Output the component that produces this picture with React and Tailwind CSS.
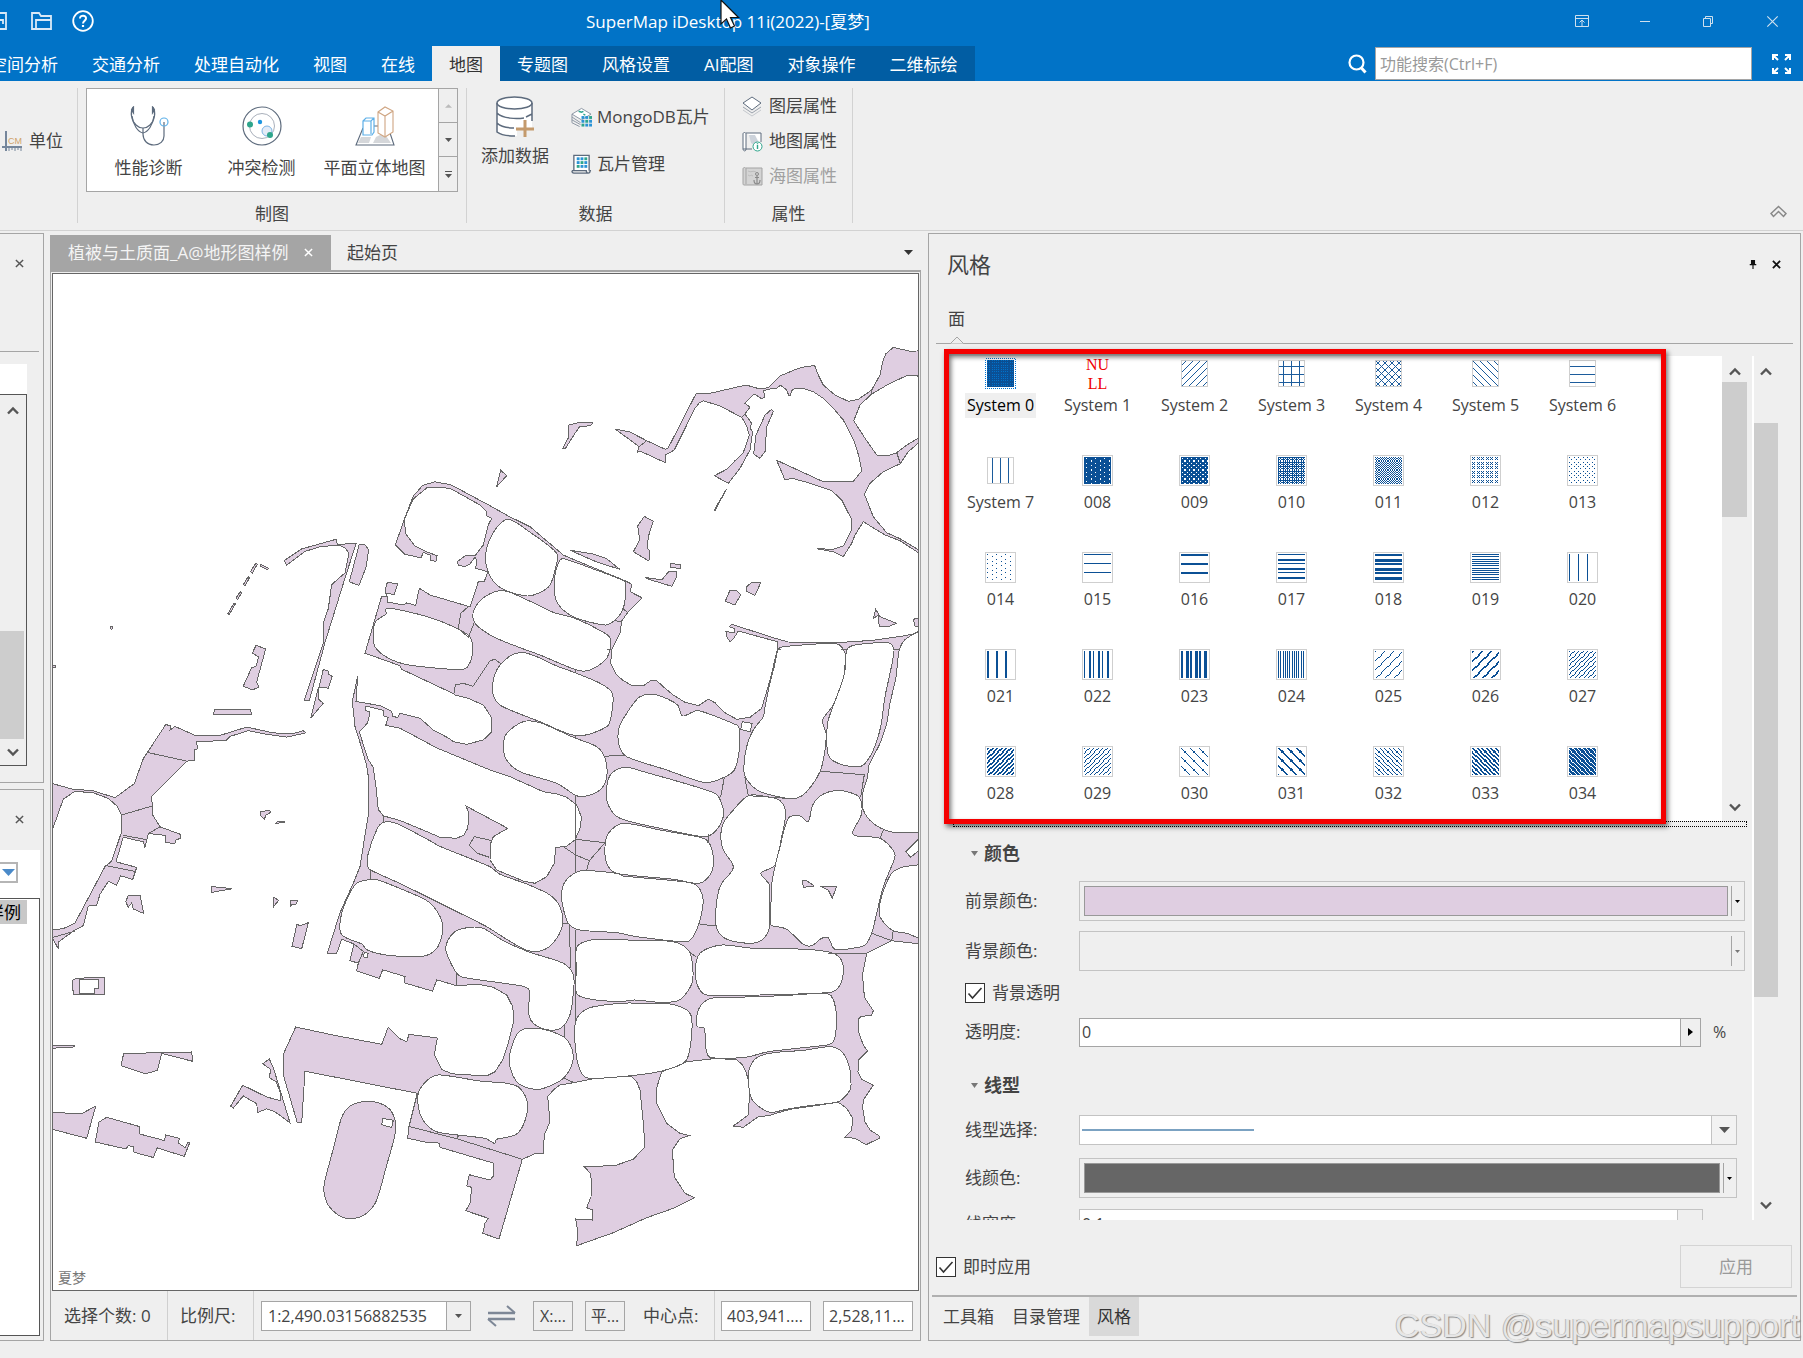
import React from "react";

/* ---------- map geometry ---------- */

// Survey sheets: [left, top, horizontal scale, vertical scale]
const SHEETS = {
  n: [440, 270, 3, 3],
  m: [440, 680, 3, 3],
  s: [440, 1050, 3, 3],
  w: [0, 230, 3, 2.8],
  v: [0, 780, 3, 2.7128],
};

function points(src) {
  let sheet = SHEETS.n;
  const out = [];
  for (const tok of src.trim().split(/\s+/)) {
    if (SHEETS[tok]) {
      sheet = SHEETS[tok];
      continue;
    }
    const [a, b] = tok.split(",").map(Number);
    out.push([sheet[0] + a / sheet[2], sheet[1] + b / sheet[3]]);
  }
  return out;
}

const f = (n) => n.toFixed(1);

function straight(src, close = true) {
  return "M" + points(src).map(([x, y]) => `${f(x)} ${f(y)}`).join("L") + (close ? "Z" : "");
}

function curved(src) {
  const p = points(src);
  const n = p.length;
  let d = `M${f(p[0][0])} ${f(p[0][1])}`;
  for (let i = 0; i < n; i++) {
    const a = p[(i + n - 1) % n];
    const b = p[i];
    const c = p[(i + 1) % n];
    const e = p[(i + 2) % n];
    const len = Math.hypot(c[0] - b[0], c[1] - b[1]);
    const k1 = Math.min(1 / 6, len / 3 / (Math.hypot(c[0] - a[0], c[1] - a[1]) || 1));
    const k2 = Math.min(1 / 6, len / 3 / (Math.hypot(e[0] - b[0], e[1] - b[1]) || 1));
    d += `C${f(b[0] + (c[0] - a[0]) * k1)} ${f(b[1] + (c[1] - a[1]) * k1)} ${f(c[0] - (e[0] - b[0]) * k2)} ${f(c[1] - (e[1] - b[1]) * k2)} ${f(c[0])} ${f(c[1])}`;
  }
  return d + "Z";
}

const GREEN = [
  // north-east belt
  "n 527,478 568,485 620,512 676,538 684,535 768,371 810,370 918,345 960,357 985,353 1020,318 1070,297 1100,289 1124,287 1135,315 1150,345 1185,375 1225,394 1255,388 1295,360 1320,315 1328,275 1337,252 1360,232 1410,244 1430,243 1450,230 1450,325 1430,317 1400,317 1350,340 1295,372 1260,405 1241,452 1275,505 1310,555 1345,557 1370,548 1400,525 1450,496 1450,506 1405,545 1381,581 1330,605 1290,640 1273,672 1300,740 1340,788 1380,806 1450,848 1450,858 1380,812 1335,795 1270,755 1245,795 1235,820 1210,860 1180,845 1130,836 1180,838 1210,828 1235,780 1233,745 1205,690 1175,662 1100,637 1057,625 1035,630 1010,571 1147,634 1240,634 1265,603 1257,560 1243,515 1210,450 1180,415 1150,385 1120,365 1090,355 1065,355 1055,362 1050,378 1046,376 1040,360 1022,346 1010,354 985,358 970,362 975,380 965,386 943,372 925,390 915,400 930,412 915,432 935,460 930,475 938,485 930,540 900,595 865,640 823,617 860,598 885,572 910,548 928,495 920,468 905,442 840,408 790,392 778,398 765,415 703,540 676,555 676,578 600,543 592,547 597,530",
  // central belt
  "w 1186,882 1215,805 1240,745 1268,715 1305,705 1345,712 n 30,643 150,707 205,738 270,770 370,855 385,862 555,932 574,942 572,966 607,984 565,1025 545,1053 540,1090 515,1140 512,1180 530,1215 550,1232 575,1246 612,1246 632,1232 650,1232 m 670,20 700,45 735,67 775,77 805,58 825,68 855,98 890,118 930,112 965,85 990,0 n 1012,1140 1012,1115 895,1083 880,1107 870,1115 860,1100 858,1085 885,1088 883,1075 868,1070 875,1063 1000,1103 1045,1116 1190,1118 1300,1111 1390,1098 1450,1086 m 1450,793 1355,782 1280,820 1268,880 1270,925 1275,955 1300,992 1295,1005 1262,1010 1255,1018 1257,1060 1270,1095 1283,1113 1255,1140 1254,1175 1265,1198 1300,1215 s 1270,150 1268,175 1275,215 1290,240 1318,258 1318,265 1278,284 1245,265 1215,262 1235,240 1238,205 1220,175 1195,157 1050,178 985,197 955,200 910,232 880,228 925,195 930,110 918,65 905,42 890,30 830,25 740,35 700,52 665,65 648,120 650,160 680,220 720,250 748,257 720,266 697,300 703,380 735,430 763,443 700,475 620,503 520,548 410,587 413,545 407,507 457,510 459,480 440,473 453,440 455,400 451,370 433,350 490,348 530,345 580,328 615,290 610,220 600,120 590,95 575,80 500,78 400,98 360,105 340,120 323,140 330,215 313,255 310,310 285,311 247,328 177,567 128,550 135,520 145,505 77,482 90,460 95,412 80,408 88,374 150,390 160,378 162,340 0,292 v 1318,985 1275,982 1223,972 1227,940 1252,850 915,790 905,930 892,930 850,800 852,740 887,670 1000,692 1145,717 1165,670 1200,702 1220,710 1227,690 1312,700 1303,745 1325,785 1355,797 s 140,78 165,65 188,30 m 205,1090 222,1020 218,980 200,945 160,922 115,913 50,917 v 1310,542 1298,573 1212,550 1215,533 1148,515 1138,538 1070,518 1075,497 1050,490 1062,445 1025,432 1010,470 982,470 1020,360 1060,280 1080,235 1095,150 1105,95 1105,0 w 1105,1530 1100,1500 1085,1450 1065,1390 1057,1320 1073,1250 1068,1320 1140,1332 1175,1348 1178,1362 1193,1365 1200,1353 1260,1367 1300,1400 1350,1425 m 40,185 80,193 130,180 155,155 153,110 130,75 85,55 45,45 w 1360,1298 1205,1230 1200,1220 1095,1185 1145,1025 1160,1027 1155,1010 1162,987 1193,990 1183,1020 1160,1018 1163,1042 1210,1050 1220,1044 1247,1051 1258,1003 1290,1022 1410,1055 n 115,935 133,935 143,905 107,895 110,870 105,862 90,882 75,890 55,885 52,875 75,858 105,857 130,825 145,765 155,745 140,738 140,725 120,705 30,655 w 1305,720 1280,722 1240,753 1213,810 1217,850 1245,885 1285,903 1311,912 1308,928 1292,925 1290,910 1270,903 1263,918 1215,908",
  // western arc
  "w 853,925 905,893 1008,866 1012,880 1068,878 1035,975 975,1155 928,1318 913,1317 972,1150 970,1100 985,1060 995,993 1035,960 1047,905 1035,890 1015,882 960,887 915,900 860,938",
  "w 1078,880 1095,882 1106,895 1098,945 1077,995 1048,985",
  "w 768,932 772,936 757,960 751,957",
  "w 782,936 806,947 803,951 781,942",
  "w 745,970 748,974 736,996 730,993",
  "w 720,1013 725,1015 713,1035 708,1031",
  "w 702,1045 706,1047 688,1077 684,1074",
  "w 331,1112 336,1110 338,1117 333,1118",
  "w 158,1219 167,1219 167,1224 158,1224",
  "w 768,1163 797,1173 770,1265 776,1280 757,1288 730,1277 755,1225 768,1222 776,1195 757,1185",
  "w 970,1230 985,1235 987,1245 997,1250 985,1283 957,1280",
  "w 955,1283 957,1315 970,1325 932,1367 950,1300",
  "w 645,1342 750,1342 755,1356 640,1357",
  // western belt
  "w 150,1548 222,1567 v 275,28 345,48 w 403,1550 430,1480 497,1385 512,1388 510,1400 525,1390 585,1415 660,1415 740,1392 820,1408 880,1410 910,1402 917,1408 860,1420 800,1412 745,1402 690,1418 678,1430 590,1432 592,1453 583,1455 583,1485 560,1487 v 455,45 458,95 480,127 540,147 542,158 527,163 525,172 497,170 495,150 445,145 435,183 430,168 370,155 348,222 410,237 398,270 362,260 350,285 325,275 300,310 290,340 265,342 250,395 220,410 175,440 175,458 158,430 150,430 150,408 190,403 225,388 315,235 335,220 365,140 365,95 350,70 325,50 275,33 222,32 190,52 160,128 150,140",
  // detached parcels
  "n 385,466 415,458 458,458 455,464 435,470 420,468 405,490 375,537 368,535 387,500",
  "n 182,601 200,617 170,650",
  "n 859,658 825,722 823,720",
  "n 995,418 1000,425 980,470 975,545 960,565 941,552 948,495 975,435",
  "n 613,739 640,754 625,800 622,835 628,840 627,873 580,845 599,810 593,768",
  "n 390,841 460,852 500,866 539,898 470,876",
  "n 690,880 722,884 722,895 692,893",
  "n 615,922 665,930 685,906 710,904 710,920 695,949 630,929",
  "n 870,961 890,963 902,975 884,1005 856,994",
  "n 935,937 962,938 945,976 919,964 920,950",
  "n 1307,1018 1320,1040 1369,1060 1350,1068 1318,1070 1314,1035 1300,1046",
  "n 1420,1048 1450,1040 1450,1068 1425,1068",
  "v 780,87 808,82 812,88 798,95 793,107 783,98",
  "v 828,117 833,112 853,113 853,116",
  "v 634,289 697,295 634,305",
  "v 820,318 836,326 820,345",
  "v 871,327 892,327 890,336 875,338 872,345",
  "v 385,313 420,312 431,362 400,350 395,333 385,345 377,330",
  "v 890,393 905,394 925,387 905,458 876,451",
  "v 217,543 230,538 313,535 313,582 220,582",
  "v 150,720 224,720 224,724 150,728",
  "v 371,742 575,738 578,763 485,742 472,788 435,797 363,775",
  "v 150,902 245,905 287,885 260,972 150,946",
  "v 297,928 320,915 418,940 418,960 493,978 497,963 538,972 535,985 555,997 563,984 569,984 553,1021 472,998 460,1024 402,1010 400,995 385,992 378,1001 286,982",
  "v 788,770 808,757 820,780 870,930 825,900 800,892 773,902 770,878 730,857 700,890 692,885 728,828 800,860 842,870 840,845 828,818 808,808 812,785",
];

const STADIUM =
  "v 1025,915 1050,885 1095,872 1140,877 1175,900 1187,950 1160,1045 1130,1140 1105,1172 1075,1187 1030,1187 990,1160 973,1125 973,1095 1000,1000";

const BLOCKS = [
  "n 205,748 265,783 350,850 345,900 330,945 305,965 262,978 190,958 150,918 137,850 165,780",
  "n 370,866 460,897 553,933 558,950 550,1015 525,1050 495,1065 400,1040 350,995 343,930 355,880",
  "n 190,962 262,990 340,1027 405,1045 495,1090 512,1110 500,1165 450,1200 410,1200 300,1155 240,1133 160,1100 105,1060 102,1020 135,980",
  "w 1158,1060 1190,1062 1290,1085 1370,1115 1410,1140 1418,1180 1405,1220 1385,1231 1290,1225 1210,1215 1150,1190 1122,1160 1125,1100 1158,1075",
  "n 250,1148 290,1160 350,1188 405,1208 480,1240 m 517,40 515,100 500,140 410,167 300,125 240,102 180,75 158,40 160,0 n 170,1200 185,1180 215,1155",
  "m 250,125 300,128 400,172 470,200 495,235 500,290 480,330 430,350 405,345 350,310 240,275 200,240 190,200 200,160",
  "m 600,50 650,45 712,74 728,108 775,92 890,135 898,145 898,210 883,270 850,293 800,308 750,295 680,270 560,230 537,195 537,145 560,100",
  "m 555,262 600,272 825,340 848,380 850,410 825,455 790,470 670,447 540,415 505,375 500,320 515,280",
  "m 550,430 660,450 780,472 805,485 820,530 815,575 790,605 765,610 700,598 530,580 500,550 495,500 505,460",
  "m 430,572 530,580 550,588 700,602 765,613 788,650 785,700 765,760 740,785 590,770 530,758 420,750 385,730 365,660 370,615 395,585",
  "v 1150,115 1190,118 1290,165 1320,180 m 150,560 180,583 260,612 330,645 360,680 368,730 350,775 315,808 265,812 200,778 140,740 0,670 v 1210,285 1113,245 1103,235 1103,205 1130,135",
  "v 1070,280 1113,270 1130,270 1210,298 1285,330 1320,370 1328,405 1315,450 1290,472 1260,479 1180,477 1130,470 1100,460 1085,445 1025,420 1022,375 1040,325",
  "m 90,742 130,745 190,782 265,815 370,850 400,885 400,940 388,1010 355,1048 300,1043 268,1010 267,930 245,918 75,893 50,880 20,820 20,790 45,755",
  "m 240,1053 300,1046 370,1070 395,1105 398,1145 370,1195 320,1222 285,1228 235,1210 210,1160 212,1110",
  "m 410,802 440,783 480,778 590,781 700,785 745,810 757,850 757,905 735,945 710,963 660,967 585,960 540,965 450,957 410,940 409,870",
  "m 445,985 540,970 610,970 690,972 740,990 755,1015 752,1090 735,1145 665,1173 575,1187 450,1195 425,1180 408,1120 407,1025",
  "m 845,795 940,805 1100,808 1180,820 1208,850 1205,905 1185,932 1165,938 960,945 800,945 770,910 768,850 785,815",
  "m 830,953 960,950 1060,945 1165,942 1187,985 1188,1050 1180,1085 1160,1095 985,1115 915,1132 810,1132 797,1100 793,1045 770,1038 775,990 800,960",
  "m 955,1130 1000,1118 1090,1111 1170,1100 1205,1115 1228,1160 1233,1210 s 1230,120 1210,145 1190,157 1100,168 1040,178 990,187 955,168 932,140 925,70 935,40",
  "n 1014,1140 1030,1130 1190,1122 1215,1150 1212,1215 m 1205,20 1180,75 1148,120 1158,160 1155,210 1140,275 1100,335 1070,355 1040,355 960,335 925,305 912,275 920,200 940,150 970,110 975,80 992,0 n 1003,1190",
  "n 1220,1140 1245,1125 1345,1118 1362,1140 1350,1210 m 1335,50 1322,140 1300,210 1270,255 1240,260 1190,248 1165,225 1160,170 1165,120 1190,50 1208,0 n 1217,1190",
  "m 925,347 980,350 1020,362 1037,400 1025,470 1005,555 963,580 988,615 988,680 988,745 965,780 925,790 855,775 828,735 832,650 845,610 880,562 850,510 842,470 850,430 880,390",
  "m 1185,332 1220,335 1258,352 1265,400 1238,455 1245,467 1320,475 1355,505 1365,530 1330,620 1310,700 1295,760 1275,795 1235,805 1185,808 1165,773 1145,775 1115,797 1090,793 1040,748 1000,738 993,735 993,670 997,600 1020,500 1045,415 1080,408 1105,425 1118,375 1145,345",
  "v 1320,800 s 120,93 200,100 240,115 263,165 250,225 225,255 170,268 163,280 135,265 0,248 v 1285,940 1260,905 1255,850 1285,812",
  "n 1460,1088 1400,1105 1378,1140 1368,1220 m 1350,70 1340,130 1320,190 1287,255 1283,290 1268,340 1270,390 1300,430 1350,455 1400,457 1470,440 1500,200",
  "m 1460,556 1420,557 1385,562 1355,580 1335,620 1320,670 1320,710 1355,750 1400,760 1460,772 1500,660",
];

const GAPS = [
  "w 1078,1405 1103,1380 1110,1350 1097,1345 1098,1333 1130,1340 1150,1345 1150,1360 1165,1365 1157,1387 1200,1395 1310,1450 m 150,270 210,290 310,335 350,342 380,352 410,375 424,410 422,440 405,480 380,498 347,503 343,550 320,590 285,610 250,603 170,570 150,540 152,490 160,470 203,445 78,378 87,400 83,445 72,465 50,475 0,472 v 1280,140 1200,110 1150,97 1135,80 1128,20 w 1120,1505 1103,1480",
  "m 907,125 937,130 930,155 902,148",
  "m 1397,515 1450,463 1450,500 1412,532",
  "v 238,541 295,541 295,565 283,567 283,580 238,580",
  "v 1148,918 1180,923 1175,943 1145,935",
  "v 1093,468 1105,470 1101,482 1090,480",
];

const ISLANDS = ["m 1087,601 1100,602 1123,618 1090,622", "m 1141,618 1190,618 1177,655 1165,630"];

const SEAMS = [
  "m 407,165 407,178",
  "m 407,345 407,577",
  "m 407,478 495,488 448,542 440,570",
  "m 370,500 407,525 448,542",
  "m 366,730 388,732 392,865",
  "m 407,750 407,1025",
  "m 495,230 520,226 555,225",
  "m 853,293 842,350",
  "m 1143,274 1273,284 1262,350",
  "m 914,290 925,347 1040,355",
  "m 780,733 828,738",
  "m 1165,820 1280,820",
  "m 1295,760 1355,782 1360,752",
  "m 1330,450 1320,475",
  "m 50,880 50,917",
  "m 375,1032 373,1070",
  "m 157,482 103,470 88,495 112,520 148,532",
  "m 43,40 46,15 70,10 98,19",
  "n 98,1250 150,1172 165,1168 183,1182",
  "n 85,1010 62,1030 55,1075 85,1102 103,1058",
  "v 1227,940 1370,973 s 247,328",
  "s 56,255 50,268",
  "n 620,512 597,530",
  "n 1295,358 1295,374",
  "n 1370,548 1381,580",
  "n 905,442 915,432",
  "n 545,1015 562,1025",
  "n 525,1052 545,1055",
  "n 500,1138 517,1138",
  "n 407,1197 407,1208",
  "n 1012,1138 1022,1138",
  "n 1203,1138 1224,1138",
  "n 1358,1138 1376,1138",
  "m 807,462 803,488",
  "m 747,815 768,830",
  "s 370,84 405,99",
  "w 443,1463 560,1487",
  "v 365,95 458,70",
  "v 315,232 405,248",
  "v 370,150 440,162",
  "v 445,145 480,127",
  "v 158,427 225,410",
  "v 1150,97 1150,115",
  "v 1113,245 1110,270",
  "v 1062,445 1090,465 1075,497",
];

function MapView() {
  return (
    <svg
      viewBox="53 274 867 1016"
      preserveAspectRatio="xMinYMin slice"
      className="block min-h-0 w-full flex-1"
      role="img"
      aria-label="植被与土质面"
      stroke="#666"
      strokeWidth="1"
      shapeRendering="crispEdges"
    >
      <g fill="#dfcee1">
        {GREEN.map((s) => (
          <path key={s} d={straight(s)} />
        ))}
        <path d={curved(STADIUM)} />
      </g>
      <g fill="#fff">
        {BLOCKS.map((s) => (
          <path key={s} d={curved(s)} />
        ))}
        {GAPS.map((s) => (
          <path key={s} d={straight(s)} />
        ))}
      </g>
      <g fill="#dfcee1">
        {ISLANDS.map((s) => (
          <path key={s} d={straight(s)} />
        ))}
      </g>
      <g fill="none">
        {SEAMS.map((s) => (
          <path key={s} d={straight(s, false)} />
        ))}
      </g>
      <text
        x="58"
        y="1283"
        fill="#777"
        stroke="none"
        fontSize="14"
        fontFamily="'Noto Sans CJK SC', sans-serif"
      >
        夏梦
      </text>
    </svg>
  );
}

/* ---------- fill symbols ---------- */

const mod = (a, b) => ((a % b) + b) % b;
const INK = "#0b5095";

const sparse = (x, y) => (mod(y, 4) === 0 && mod(x, 8) === 0) || (mod(y, 4) === 2 && mod(x, 8) === 4);
const medium = (x, y) => (mod(y, 4) === 0 && mod(x, 4) === 0) || (mod(y, 4) === 2 && mod(x, 4) === 2);
const dense = (x, y) => (mod(y, 2) === 0 && mod(x, 2) === 0) || (mod(y, 4) === 1 && mod(x, 4) === 1);

const BITMAPS = {
  "008": (x, y) => !sparse(x - 2, y - 1),
  "009": (x, y) => !medium(x - 1, y - 1),
  "010": (x, y) => !dense(x - 1, y - 1),
  "011": (x, y) => mod(x + y, 2) === 0,
  "012": dense,
  "013": medium,
  "014": sparse,
  "015": (x, y) => mod(y, 8) === 0,
  "016": (x, y) => mod(y, 8) < 2,
  "017": (x, y) => [0, 4, 5].includes(mod(y, 8)),
  "018": (x, y) => [0, 1, 4, 5, 6].includes(mod(y, 8)),
  "019": (x, y) => mod(y, 2) === 0,
  "020": (x) => mod(x, 8) === 0,
  "021": (x) => mod(x, 8) < 2,
  "022": (x) => [0, 4, 5].includes(mod(x, 8)),
  "023": (x) => [0, 1, 4, 5, 6].includes(mod(x, 8)),
  "024": (x) => mod(x, 2) === 0,
  "025": (x, y) => mod(x + y, 8) === 0,
  "026": (x, y) => mod(x + y, 8) < 2,
  "027": (x, y) => mod(x + y, 4) === 0,
  "028": (x, y) => mod(x + y, 4) < 2,
  "029": (x, y) => mod(x + y, 4) === 0,
  "030": (x, y) => mod(x - y, 8) === 0,
  "031": (x, y) => mod(x - y, 8) < 2,
  "032": (x, y) => mod(x - y, 4) === 0,
  "033": (x, y) => mod(x - y, 4) < 2,
  "034": (x, y) => mod(x - y, 4) < 3,
};

function bitmapPath(test) {
  let d = "";
  for (let y = 0; y < 24; y++) {
    for (let x = 0; x < 24; x++) {
      if (!test(x, y)) continue;
      let run = 1;
      while (x + run < 24 && test(x + run, y)) run++;
      d += `M${x} ${y}h${run}v1h-${run}z`;
      x += run;
    }
  }
  return d;
}

function lines(list) {
  return list.map(([a, b, c, e]) => `M${a} ${b}L${c} ${e}`).join("");
}

const up = [];
const down = [];
for (let k = -21; k <= 48; k += 7) {
  up.push([k, 27, k + 27, 0]);
  down.push([k, 0, k + 27, 27]);
}
const rows = [6, 14, 22].map((y) => [0, y + 0.5, 27, y + 0.5]);
const cols = [5, 13, 21].map((x) => [x + 0.5, 0, x + 0.5, 27]);

const VECTORS = {
  "System 2": lines(up),
  "System 3": lines([...rows, ...cols]),
  "System 4": lines([...up, ...down]),
  "System 5": lines(down),
  "System 6": lines(rows),
  "System 7": lines(cols),
};

const SYMBOLS = [
  ...Array.from({ length: 8 }, (_, i) => `System ${i}`),
  ...Array.from({ length: 27 }, (_, i) => String(i + 8).padStart(3, "0")),
];

function Swatch({ name }) {
  if (name === "System 0") {
    return (
      <svg width="31" height="31" viewBox="0 0 31 31" shapeRendering="crispEdges">
        <rect x="0.5" y="0.5" width="30" height="30" fill="none" stroke="#0078d7" strokeDasharray="1 1" />
        <rect x="2" y="2" width="27" height="27" fill={INK} />
        <path
          d={bitmapPath((x, y) => mod(x, 2) === 0 && mod(y, 2) === 0)}
          transform="translate(2 2) scale(1.125)"
          fill="#0072cc"
        />
      </svg>
    );
  }
  if (name === "System 1") {
    return (
      <span className="flex h-[31px] flex-col justify-center font-[Liberation_Serif] text-base leading-[19px] text-[#f00000]">
        <span>NU</span>
        <span>LL</span>
      </span>
    );
  }
  if (VECTORS[name]) {
    return (
      <svg width="31" height="31" viewBox="-2 -2 31 31">
        <svg width="27" height="27" viewBox="0 0 27 27">
          <path d={VECTORS[name]} stroke="#1c5c9c" strokeWidth="1" fill="none" />
        </svg>
        <rect x="0.5" y="0.5" width="26" height="26" fill="none" stroke="#cfcfcf" />
      </svg>
    );
  }
  return (
    <svg width="31" height="31" viewBox="0 0 31 31" shapeRendering="crispEdges">
      <rect x="0.5" y="0.5" width="30" height="30" fill="#fff" stroke="#cfcfcf" />
      <path d={bitmapPath(BITMAPS[name])} transform="translate(2 2) scale(1.125)" fill={INK} />
    </svg>
  );
}

/* ---------- small icons ---------- */

const Cross = ({ size = 9, color = "#555", w = 1.6 }) => (
  <svg width={size} height={size} viewBox="0 0 10 10" fill="none" stroke={color} strokeWidth={w}>
    <path d="M1 1l8 8M9 1L1 9" />
  </svg>
);

const Chevron = ({ down }) => (
  <svg width="12" height="9" viewBox="0 0 12 9" fill="none" stroke="#555" strokeWidth="2.4">
    <path d={down ? "M1 1.5l5 5 5-5" : "M1 7.5l5-5 5 5"} />
  </svg>
);

const Tri = ({ w = 7, h = 4, color = "#555" }) => (
  <svg width={w} height={h} viewBox="0 0 8 4" preserveAspectRatio="none">
    <path d="M0 0h8L4 4z" fill={color} />
  </svg>
);

const DARK = "#5d6b7d";

const Stethoscope = () => (
  <svg width="40" height="40" viewBox="0 0 40 40" fill="none" stroke={DARK} strokeWidth="1.2">
    <path d="M4 1C1 6 2 14 7 19c4 4 10 4 14 0 5-5 6-13 3-18" />
    <path d="M3 10c1 9 6 16 11 17 5-1 10-8 11-17" />
    <path d="M14 22v6c0 6 4 11 11 11 6 0 10-4 10-9V16" />
    <path d="M4.500 1v6L2.500 4zM23.500 1v6l2-3z" fill={DARK} />
    <circle cx="35" cy="16" r="4" stroke="#5eb0e8" />
  </svg>
);

const Conflict = () => (
  <svg width="40" height="40" viewBox="0 0 40 40" fill="none">
    <circle cx="20" cy="20" r="19" stroke={DARK} strokeWidth="1.2" />
    <circle cx="20" cy="20" r="12.500" stroke="#a9b0bb" />
    <circle cx="8" cy="18.500" r="3" fill="#2ea58c" />
    <circle cx="18" cy="16" r="2.200" fill="#1e96e0" />
    <circle cx="25" cy="25" r="5" fill="#e3ebf7" stroke="#7cb4e3" />
    <circle cx="28" cy="29" r="3" fill="#2ea58c" />
  </svg>
);

const Solid = () => (
  <svg width="40" height="40" viewBox="0 0 40 40" fill="none">
    <path d="M6 31h10l-2 6H3zM21 31l8-4 7 10H18z" fill="#d5d7da" />
    <path d="M8 22L1 39h38L34 24M19 20h5" stroke={DARK} strokeWidth="1.1" />
    <path d="M8 15l3-3h8v14l-2 3H8zM8 15h8l3-3M16 15v13" stroke="#5eb0e8" strokeWidth="1.200" fill="#fff" />
    <path d="M23 6l7-5 8 4v21l-8 5-7-4zM23 6l7 4 8-5M30 10v20" stroke="#cfa582" strokeWidth="1.100" fill="#fff" />
  </svg>
);

const Database = () => (
  <svg width="40" height="42" viewBox="0 0 40 42" fill="none" stroke={DARK} strokeWidth="1.500">
    <path d="M2 7v28c8 6 20 5 20 5V32h15V7z" fill="#fff" stroke="none" />
    <ellipse cx="19.500" cy="7" rx="17.500" ry="6" fill="#fff" />
    <path d="M2 7v29c4 3 10 4 18 4M37 7v18M2 17c6 6 20 6 27 5M2 27c5 5 12 5 17 5M31 21l6-3" />
    <path d="M30 24v17M21 33h18" stroke="#c49a6c" strokeWidth="3" />
  </svg>
);

const Dots = () => (
  <g>
    {[0, 1, 2].map((r) =>
      [0, 1, 2].map((c) => (
        <rect key={`${r}${c}`} x={c * 4} y={r * 4} width="3" height="3" fill={r + c === 2 ? "#2ea58c" : "#2a93d5"} />
      ))
    )}
  </g>
);

const Mongo = () => (
  <svg width="21" height="22" viewBox="0 0 22 22" fill="none" stroke="#8b95a3">
    <path d="M1 8l10-6 10 6-10 6z" fill="#fff" />
    <path d="M1 11l9 6M1 14l9 5M1 17l8 4M1 8v9" />
    <path d="M8 5l3 1 2-1M13 8l2 1" stroke="#2ea58c" strokeWidth="1.500" />
    <g transform="translate(11 10)" stroke="none">
      <Dots />
    </g>
  </svg>
);

const Tiles = () => (
  <svg width="21" height="22" viewBox="0 0 22 22" fill="none" stroke={DARK} strokeWidth="1.400">
    <path d="M3 18V2h16v16" fill="#fff" />
    <path d="M1 18h15c0 2 1 2.500 2 2.500s2-1 2-2.500h1M1 18c0 2 1 2.500 2 2.500h15" />
    <g transform="translate(6 4)" stroke="none">
      <Dots />
    </g>
  </svg>
);

const LayersIcon = () => (
  <svg width="20" height="21" viewBox="0 0 20 21" fill="none">
    <path d="M1 14l9 6 9-6" stroke="#c4c8cd" />
    <path d="M1 11l9 6 9-6" stroke="#9aa1ab" />
    <path d="M1 7l9-6 9 6-9 7z" stroke={DARK} fill="#fff" />
  </svg>
);

const MapInfo = () => (
  <svg width="21" height="21" viewBox="0 0 21 21" fill="none" stroke={DARK}>
    <path d="M4 2h15v9M1 18V3c0-2 3-2 3 0v15c0 3-3 2-3 0h9" fill="#fff" />
    <path d="M7 4h6l3 6-4 4-3-2z" fill="#cdd3db" stroke="none" />
    <circle cx="15.500" cy="15.500" r="4.500" stroke="#2ea58c" fill="#fff" />
    <path d="M15.500 14v4M15.500 12.200v1" stroke="#2ea58c" strokeWidth="1.400" />
  </svg>
);

const SeaMap = () => (
  <svg width="21" height="21" viewBox="0 0 21 21" fill="none" stroke="#a3a3a3">
    <path d="M4 2h16v17H2c-1 0-1-1-1-2V3c0-2 3-2 3 0v15" fill="#d4d4d4" />
    <path d="M6 5c3 2 5-1 8 1M6 9c2 2 3-1 5 1" stroke="#bdbdbd" />
    <circle cx="15" cy="8" r="1.500" stroke="#8a8a8a" />
    <path d="M15 10v8M12 14c0 3 1 4 3 4s3-1 3-4M13 11.500h4" stroke="#8a8a8a" strokeWidth="1.200" />
  </svg>
);

const Units = () => (
  <svg width="22" height="22" viewBox="0 0 22 22" fill="none" stroke="#75869b">
    <path d="M4 1v20M0 17h20" strokeWidth="2" />
    <path d="M7 18v3M10 18v2M13 18v3M16 18v2M19 18v3" />
    <text x="6" y="14" fontSize="9" fill="#cfa36a" stroke="none" fontFamily="'Liberation Sans', sans-serif">
      CM
    </text>
  </svg>
);

/* ---------- window chrome ---------- */

function TitleBar() {
  return (
    <header className="flex h-[46px] shrink-0 items-center bg-[#0173c7] pb-1 text-white">
      <div className="flex w-[94px] items-center justify-between">
        <button aria-label="保存" className="w-2 overflow-hidden">
          <svg width="8" height="20" viewBox="0 0 8 20" fill="none" stroke="#d9e9f7" strokeWidth="1.800">
            <path d="M0 2h6v16H0M0 9h3v4" />
          </svg>
        </button>
        <button aria-label="打开" className="ml-1">
          <svg width="22" height="20" viewBox="0 0 22 20" fill="none" stroke="#d9e9f7" strokeWidth="1.800">
            <path d="M1 18V2h7l2 3h10v13zM5 18V9h15" />
          </svg>
        </button>
        <button aria-label="帮助">
          <svg width="22" height="22" viewBox="0 0 22 22" fill="none" stroke="#fff" strokeWidth="1.800">
            <circle cx="11" cy="11" r="9.800" />
            <path d="M8 8.500C8 4.500 14.500 5 14 8.500c0 2-3 2.500-3 5" strokeWidth="2" />
            <path d="M11 15v2" strokeWidth="2.200" />
          </svg>
        </button>
      </div>
      <div className="relative ml-[492px]">
        <h1 className="pt-0.5 text-[17px] leading-6 whitespace-nowrap">SuperMap iDesktop 11i(2022)-[夏梦]</h1>
        <svg className="absolute -top-2 left-[134px]" width="20" height="30" viewBox="0 0 20 30">
          <path d="M1 0v24l5.500-5 4 9 4-2-4-8.500h8z" fill="#fff" stroke="#111" strokeWidth="1.200" />
        </svg>
      </div>
      <div className="mr-6 ml-auto flex items-center gap-[51px] text-[#cfe0ee]">
        <button aria-label="功能区选项">
          <svg width="14" height="14" viewBox="0 0 14 14" fill="none" stroke="currentColor">
            <path d="M.5 1.500h13v11H.5zM.5 4.500h13M7 12V6M4.500 8.500L7 6l2.500 2.500" />
          </svg>
        </button>
        <button aria-label="最小化">
          <svg width="12" height="12" viewBox="0 0 12 12" stroke="currentColor">
            <path d="M0 6.500h10" />
          </svg>
        </button>
        <button aria-label="还原">
          <svg width="12" height="12" viewBox="0 0 12 12" fill="none" stroke="currentColor">
            <path d="M.5 3.500h7v8h-7zM2.500 3V1.500h7v7H8" />
          </svg>
        </button>
        <button aria-label="关闭">
          <Cross size={13} color="currentColor" w={0.9} />
        </button>
      </div>
    </header>
  );
}

const TABS = ["空间分析", "交通分析", "处理自动化", "视图", "在线", "地图"];
const CONTEXT_TABS = ["专题图", "风格设置", "AI配图", "对象操作", "二维标绘"];

function RibbonTabs() {
  return (
    <nav className="flex h-[35px] shrink-0 items-stretch bg-[#0173c7] text-[17px] text-white">
      <div className="-ml-[27px] flex">
        {TABS.map((t) => (
          <button
            key={t}
            className={
              t === "地图"
                ? "bg-[#efefef] px-[17px] pt-0.5 whitespace-nowrap text-[#333]"
                : "px-[17px] pt-0.5 whitespace-nowrap"
            }
          >
            {t}
          </button>
        ))}
      </div>
      <div className="flex bg-[#015da3]">
        {CONTEXT_TABS.map((t) => (
          <button key={t} className="px-[17px] pt-0.5 whitespace-nowrap">
            {t}
          </button>
        ))}
      </div>
      <div className="ml-auto flex items-center">
        <label htmlFor="search" aria-label="功能搜索">
          <svg width="19" height="20" viewBox="0 0 19 20" fill="none" stroke="#fff" strokeWidth="2.200">
            <circle cx="8.500" cy="8.500" r="7" />
            <path d="M13.500 14l4 4.500" strokeWidth="3" />
          </svg>
        </label>
        <input
          id="search"
          placeholder="功能搜索(Ctrl+F)"
          className="ml-2 h-[33px] w-[377px] border border-[#a5a5a5] bg-white px-1 text-base text-[#333] outline-none placeholder:text-[#999]"
        />
        <button aria-label="全屏" className="mr-3 ml-5">
          <svg width="19" height="20" viewBox="0 0 19 20" fill="none" stroke="#fff" strokeWidth="2">
            <path d="M1 6V1h5M13 1h5v5M1 14v5h5M18 14v5h-5M2 2l4 4M17 2l-4 4M2 18l4-4M17 18l-4-4" />
          </svg>
        </button>
      </div>
    </nav>
  );
}

function GalleryItem({ icon, label }) {
  return (
    <button className="flex w-[113px] flex-col items-center gap-2.5 whitespace-nowrap">
      {icon}
      <span className="leading-6">{label}</span>
    </button>
  );
}

function Ribbon() {
  const group = "flex flex-col border-r border-[#d2d2d2]";
  const caption = "mt-auto text-center leading-[18px]";
  return (
    <section className="flex h-[150px] shrink-0 border-b border-[#d2d2d2] py-[7px] text-[17px] text-[#444]">
      <div className={`${group} w-[78px]`}>
        <button className="mt-[41px] ml-0.5 flex items-center gap-[5px] whitespace-nowrap">
          <Units />
          <span className="leading-6">单位</span>
        </button>
      </div>
      <div className={`${group} px-2`}>
        <div className="flex h-[104px] border border-[#a5a5a5] bg-white">
          <div className="flex w-[351px] items-center pt-1.5 pl-[5px]">
            <GalleryItem icon={<Stethoscope />} label="性能诊断" />
            <GalleryItem icon={<Conflict />} label="冲突检测" />
            <GalleryItem icon={<Solid />} label="平面立体地图" />
          </div>
          <div className="grid w-[19px] grid-rows-3 divide-y divide-[#a5a5a5] border-l border-[#a5a5a5] bg-[#efefef]">
            <button aria-label="上" className="flex items-center justify-center">
              <svg width="7" height="4" viewBox="0 0 8 4">
                <path d="M0 4h8L4 0z" fill="#bbb" />
              </svg>
            </button>
            <button aria-label="下" className="flex items-center justify-center">
              <Tri />
            </button>
            <button aria-label="更多" className="flex flex-col items-center justify-center gap-0.5">
              <span className="h-px w-[7px] bg-[#555]" />
              <Tri />
            </button>
          </div>
        </div>
        <div className={caption}>制图</div>
      </div>
      <div className={`${group} w-[258px]`}>
        <div className="flex">
          <button className="mt-2 ml-[14px] flex flex-col items-center gap-1.5 whitespace-nowrap">
            <Database />
            <span className="leading-6">添加数据</span>
          </button>
          <div className="mt-[17px] ml-[22px] flex flex-col gap-[23px]">
            <button className="flex items-center gap-[5px] leading-6 whitespace-nowrap">
              <Mongo />
              MongoDB瓦片
            </button>
            <button className="flex items-center gap-[5px] leading-6 whitespace-nowrap">
              <Tiles />
              瓦片管理
            </button>
          </div>
        </div>
        <div className={caption}>数据</div>
      </div>
      <div className={`${group} w-[128px]`}>
        <div className="mt-[6px] ml-[17px] flex flex-col gap-[11px]">
          <button className="flex items-center gap-[7px] leading-6 whitespace-nowrap">
            <LayersIcon />
            图层属性
          </button>
          <button className="flex items-center gap-1.5 leading-6 whitespace-nowrap">
            <MapInfo />
            地图属性
          </button>
          <button disabled className="flex items-center gap-1.5 leading-6 whitespace-nowrap text-[#a0a0a0]">
            <SeaMap />
            海图属性
          </button>
        </div>
        <div className={caption}>属性</div>
      </div>
      <button aria-label="折叠功能区" className="mt-auto mr-4 mb-[5px] ml-auto">
        <svg width="17" height="13" viewBox="0 0 17 13" fill="none" stroke="#888" strokeWidth="1.500">
          <path d="M1 8.500L8.500 1.500 16 8.500l-2.500 3-5-5-5 5z" />
        </svg>
      </button>
    </section>
  );
}

/* ---------- left dock ---------- */

function LeftDock() {
  return (
    <aside className="flex w-11 shrink-0 flex-col gap-1.5">
      <section className="flex h-[550px] flex-col border-y border-r border-[#a5a5a5]">
        <div className="mr-1 flex h-[118px] justify-end border-b border-[#a5a5a5] pt-6 pr-[15px]">
          <button aria-label="关闭" className="h-2.5">
            <Cross />
          </button>
        </div>
        <div className="mt-3 h-[30px] w-[27px] bg-white" />
        <div className="flex h-[372px] w-[27px] flex-col items-center border-y border-r border-[#555]">
          <button aria-label="上" className="flex h-[30px] items-center">
            <Chevron />
          </button>
          <div className="mt-auto h-[108px] w-6 self-start bg-[#cdcdcd]" />
          <button aria-label="下" className="flex h-[26px] items-center">
            <Chevron down />
          </button>
        </div>
      </section>
      <section className="flex min-h-0 flex-1 flex-col border-y border-r border-[#a5a5a5]">
        <div className="mr-1 flex h-[60px] justify-end pt-6 pr-[15px]">
          <button aria-label="关闭" className="h-2.5">
            <Cross />
          </button>
        </div>
        <div className="mr-[3px] h-12 bg-white pt-3">
          <button aria-label="选择" className="flex h-[21px] w-[18px] items-center border-2 border-l-0 border-[#b5b5b5] pl-0.5">
            <Tri w={13} h={7} color="#4a8ac9" />
          </button>
        </div>
        <div className="mr-[3px] mb-1 flex-1 overflow-hidden border-y border-r border-[#555] bg-white">
          <div className="mt-px flex h-6 w-[27px] items-center justify-end overflow-hidden bg-[#c8c8c8] pt-0.5 pr-1.5 text-[17px] whitespace-nowrap text-black">
            样例
          </div>
        </div>
      </section>
    </aside>
  );
}

/* ---------- map window ---------- */

function MapWindow() {
  const box = "h-[30px] border border-[#a5a5a5] text-base";
  return (
    <main className="flex min-w-0 flex-1 flex-col pt-0.5">
      <div className="flex h-[35px] shrink-0 items-center text-[17px]">
        <div className="flex h-full w-[281px] items-center bg-[#a5a5a5] pl-[18px] text-[#f4f4f4]">
          <span className="whitespace-nowrap">植被与土质面_A@地形图样例</span>
          <button aria-label="关闭标签" className="mr-[18px] ml-auto">
            <Cross color="#fff" />
          </button>
        </div>
        <button className="ml-4 whitespace-nowrap text-[#444]">起始页</button>
        <button aria-label="标签列表" className="mr-2 ml-auto">
          <Tri w={9} h={5} color="#333" />
        </button>
      </div>
      <div className="flex min-h-0 flex-1 flex-col border-x border-t-2 border-b border-[#a5a5a5] px-px pt-px">
        <div className="flex min-h-0 flex-1 flex-col border border-[#666] bg-white">
          <MapView />
        </div>
        <div className="flex h-[49px] shrink-0 items-stretch text-[17px] whitespace-nowrap text-[#444]">
          <div className="flex w-[116px] items-center border-r border-[#cfcfcf] pl-3">选择个数: 0</div>
          <label htmlFor="scale" className="flex w-[86px] items-center border-r border-[#cfcfcf] pl-3">
            比例尺:
          </label>
          <div className="ml-[7px] flex items-center">
            <div className="relative">
              <select id="scale" className={`${box} w-[210px] appearance-none bg-white pl-1.5 outline-none`}>
                <option>1:2,490.03156882535</option>
              </select>
              <span className="pointer-events-none absolute inset-y-px right-px flex w-[24px] items-center justify-center border-l border-[#a5a5a5] bg-[#efefef]">
                <Tri />
              </span>
            </div>
            <button aria-label="交换" className="ml-4">
              <svg width="30" height="24" viewBox="0 0 30 24" fill="none" stroke="#7d8796" strokeWidth="2.600">
                <path d="M1 9h27M28 15H1" />
                <path d="M20 2l8 7M9 22l-8-7" strokeWidth="2" />
              </svg>
            </button>
            <button className={`${box} ml-4 w-10`}>X:...</button>
            <button className={`${box} ml-3 w-10`}>平...</button>
            <label htmlFor="cx" className="ml-[18px]">
              中心点:
            </label>
          </div>
          <div className="ml-auto flex items-center gap-3 border-l border-[#cfcfcf] pr-[6px] pl-1.5">
            <input id="cx" aria-label="中心点 X" defaultValue="403,941...." className={`${box} w-[90px] bg-white px-[5px] outline-none`} />
            <input aria-label="中心点 Y" defaultValue="2,528,11..." className={`${box} w-[90px] bg-white px-[5px] outline-none`} />
          </div>
        </div>
      </div>
    </main>
  );
}

/* ---------- style panel ---------- */

function Check({ id, label }) {
  return (
    <span className="flex items-center gap-[7px]">
      <span className="relative h-5 w-5">
        <input
          id={id}
          type="checkbox"
          defaultChecked
          className="peer block h-5 w-5 appearance-none border border-[#333] bg-white"
        />
        <svg
          className="pointer-events-none absolute inset-0 hidden peer-checked:block"
          width="20"
          height="20"
          viewBox="0 0 20 20"
          fill="none"
          stroke="#333"
          strokeWidth="1.600"
        >
          <path d="M3.500 10.500l4 4.500 9-10" />
        </svg>
      </span>
      <label htmlFor={id} className="leading-6">
        {label}
      </label>
    </span>
  );
}

function ColorButton({ id, swatch, disabled }) {
  return (
    <button
      id={id}
      type="button"
      disabled={disabled}
      className="flex h-10 flex-1 items-center border border-[#c3c3c3] p-1"
    >
      <span className={`h-full flex-1 ${swatch}`} />
      <span className="ml-[3px] flex h-full w-[9px] items-center justify-end border-l border-[#a5a5a5]">
        <Tri w={5} h={3} color={disabled ? "#777" : "#000"} />
      </span>
    </button>
  );
}

function Section({ title, className }) {
  return (
    <h3 className={`${className} flex items-center gap-1.5 pl-1.5 text-[18px] font-bold`}>
      <Tri w={7} h={5} color="#777" />
      {title}
    </h3>
  );
}

function SymbolList() {
  return (
    <div className="relative flex h-[465px] shrink-0">
      <div className="min-w-0 flex-1 overflow-hidden bg-white pl-[7px]">
        <div role="listbox" aria-label="填充符号" className="grid grid-cols-[repeat(7,97px)]">
          {SYMBOLS.map((name) => (
            <button
              key={name}
              role="option"
              aria-selected={name === "System 0"}
              className="flex h-[97px] flex-col items-center gap-1 pt-0.5 text-base whitespace-nowrap"
            >
              <Swatch name={name} />
              <span className={name === "System 0" ? "bg-[#efefef] px-0.5 leading-[25px] text-black" : "px-0.5 leading-[25px]"}>
                {name}
              </span>
            </button>
          ))}
        </div>
      </div>
      <div className="mr-[5px] flex w-[25px] flex-col items-center bg-[#efefef]">
        <button aria-label="上" className="flex h-[26px] items-center pt-1">
          <Chevron />
        </button>
        <div className="h-[135px] w-full bg-[#cdcdcd]" />
        <button aria-label="下" className="mt-auto flex h-7 items-center">
          <Chevron down />
        </button>
      </div>
      <div className="pointer-events-none absolute -top-[7px] -bottom-[3px] -left-px w-[722px] border-[5px] border-[#f40000] shadow-[2px_3px_5px_rgba(0,0,0,0.55),inset_2px_3px_5px_rgba(0,0,0,0.55)]" />
    </div>
  );
}

function StylePanel() {
  const label = "w-[114px] shrink-0";
  return (
    <aside className="mr-[2px] ml-px flex min-w-0 flex-1 flex-col border border-[#a5a5a5] text-[17px] whitespace-nowrap text-[#444]">
      <div className="flex h-[61px] shrink-0 items-center pr-[19px] pl-[18px]">
        <h2 className="text-[22px]">风格</h2>
        <button aria-label="自动隐藏" className="mr-[15px] ml-auto">
          <svg width="8" height="9" viewBox="0 0 8 11">
            <path d="M1.500 0h5v5H8v1.500H4.700V11H3.300V6.500H0V5h1.500z" fill="#111" />
          </svg>
        </button>
        <button aria-label="关闭">
          <Cross color="#111" w={2} />
        </button>
      </div>
      <div className="mx-[7px] flex h-[49px] shrink-0 flex-col border-b border-[#a5a5a5]">
        <button className="mt-3 ml-3 self-start leading-6">面</button>
        <svg className="mt-auto -mb-px ml-[14px] block" width="14" height="8" viewBox="0 0 14 8">
          <path d="M.5 7.500L7 1l6.500 6.500" fill="#efefef" stroke="#a5a5a5" />
        </svg>
      </div>
      <div className="mt-3 flex min-h-0 flex-1 overflow-clip pr-[22px] pl-4 [overflow-clip-margin:10px]">
        <div className="flex min-w-0 flex-1 flex-col [clip-path:inset(-10px_-10px_0_-10px)]">
          <SymbolList />
          <div className="mr-[5px] ml-2 h-1.5 shrink-0 border border-dotted border-black" />
          <form className="flex flex-col pr-[7px] pl-[20px]">
            <Section title="颜色" className="h-[52px]" />
            <div className="flex h-11 items-center">
              <label htmlFor="fg" className={label}>
                前景颜色:
              </label>
              <ColorButton id="fg" swatch="border border-[#999] bg-[#dfcee1]" />
            </div>
            <div className="flex h-14 items-center">
              <label htmlFor="bg" className={label}>
                背景颜色:
              </label>
              <ColorButton id="bg" swatch="" disabled />
            </div>
            <div className="flex h-7 items-center">
              <Check id="bgt" label="背景透明" />
            </div>
            <div className="flex h-[50px] items-center">
              <label htmlFor="op" className={label}>
                透明度:
              </label>
              <input
                id="op"
                defaultValue="0"
                className="h-[29px] min-w-0 flex-1 border border-[#a5a5a5] bg-white px-0.5 text-base outline-none"
              />
              <button
                type="button"
                aria-label="调节透明度"
                className="flex h-[29px] w-5 items-center justify-center border border-l-0 border-[#a5a5a5]"
              >
                <svg width="5" height="8" viewBox="0 0 5 8">
                  <path d="M0 0l5 4-5 4z" fill="#000" />
                </svg>
              </button>
              <span className="w-[44px] pl-3 text-base">%</span>
            </div>
            <Section title="线型" className="h-14" />
            <div className="mt-0.5 flex h-[30px] items-center pr-2">
              <label htmlFor="lt" className={label}>
                线型选择:
              </label>
              <div className="relative h-[30px] flex-1">
                <select id="lt" className="block h-full w-full appearance-none border border-[#c3c3c3] bg-white outline-none">
                  <option aria-label="实线" />
                </select>
                <span className="pointer-events-none absolute top-[14px] left-[3px] h-0.5 w-[172px] bg-[#7ba2c2]" />
                <span className="pointer-events-none absolute inset-y-px right-px flex w-[25px] items-center justify-center border-l border-[#c3c3c3] bg-[#f2f2f2]">
                  <Tri w={11} h={6} />
                </span>
              </div>
            </div>
            <div className="mt-[13px] flex h-10 items-center pr-2">
              <label htmlFor="lc" className={label}>
                线颜色:
              </label>
              <ColorButton id="lc" swatch="border border-[#999] bg-[#666]" />
            </div>
            <div className="mt-[11px] flex h-[30px] items-center">
              <label htmlFor="lw" className={label}>
                线宽度:
              </label>
              <input
                id="lw"
                defaultValue="0.1"
                className="h-[30px] min-w-0 flex-1 border border-[#c3c3c3] bg-white px-0.5 text-base outline-none"
              />
              <span className="h-[30px] w-[25px] border border-l-0 border-[#c3c3c3]" />
              <span className="w-[42px] pl-2 text-base">mm</span>
            </div>
          </form>
        </div>
        <div className="flex w-[26px] flex-col items-center border-l-2 border-white">
          <button aria-label="上" className="flex h-[26px] items-center pt-1">
            <Chevron />
          </button>
          <div className="mt-[41px] h-[574px] w-full bg-[#cdcdcd]" />
          <button aria-label="下" className="mt-auto flex h-7 items-center pb-0.5">
            <Chevron down />
          </button>
        </div>
      </div>
      <div className="mx-[3px] flex h-[77px] shrink-0 items-center justify-between border-b-2 border-[#b0b0b0] pt-[18px] pr-[5px] pl-1">
        <Check id="live" label="即时应用" />
        <button disabled className="h-[43px] w-[112px] border border-[#d4d4d4] text-[#999]">
          应用
        </button>
      </div>
      <div className="flex h-[43px] shrink-0 items-start pl-[5px]">
        <button className="h-[39px] px-[9px]">工具箱</button>
        <button className="h-[39px] px-[9px]">目录管理</button>
        <button className="h-[39px] bg-[#d9d9d9] px-2 text-[#333]">风格</button>
        <span className="mt-1 ml-auto font-[Liberation_Sans] text-[34px] leading-[48px] text-[#e6e6e6] [text-shadow:1px_1px_1px_#888,-1px_0_0_#b8b8b8]">
          CSDN @supermapsupport
        </span>
      </div>
    </aside>
  );
}

export default function App() {
  return (
    <div className="flex h-screen flex-col overflow-hidden bg-[#efefef] font-['Open_Sans','Noto_Sans_CJK_SC',sans-serif]">
      <TitleBar />
      <RibbonTabs />
      <Ribbon />
      <div className="flex min-h-0 flex-1 gap-1.5 pt-0.5 pb-[17px]">
        <LeftDock />
        <MapWindow />
        <StylePanel />
      </div>
    </div>
  );
}
